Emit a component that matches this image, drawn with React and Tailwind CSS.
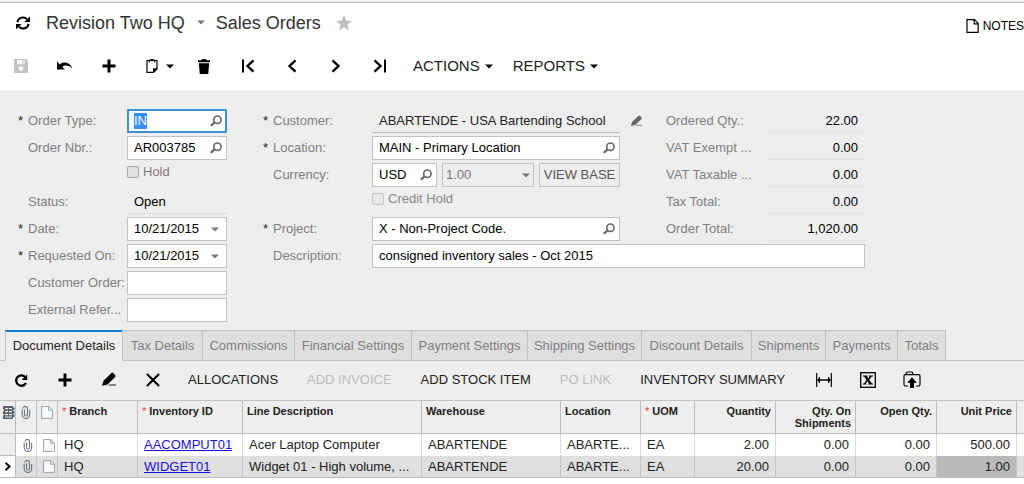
import React, { useEffect, useRef } from "react";

const Svg = ({ w = 16, h = 16, className = "", children }) => (
  <svg width={w} height={h} viewBox={`0 0 ${w} ${h}`} className={`shrink-0 ${className}`} fill="currentColor" aria-hidden="true">
    {children}
  </svg>
);

const Caret = ({ className = "" }) => (
  <Svg w={8} h={5} className={className}>
    <path d="M0 0.5h8L4 4.5z" />
  </Svg>
);

const SearchIcon = () => (
  <Svg w={12} h={12} className="text-[#666]">
    <circle cx="7.4" cy="4.700" r="3.700" fill="none" stroke="currentColor" strokeWidth="1.600" />
    <path d="M4.600 7.400L.8 10.800" stroke="currentColor" strokeWidth="2.200" />
  </Svg>
);

const SyncIcon = () => (
  <Svg w={16} h={16}>
    <path d="M2.400 7.200A5.600 5.600 0 0 1 12 4.200M13.600 8.800A5.600 5.600 0 0 1 4 11.800" fill="none" stroke="currentColor" strokeWidth="2" />
    <path d="M15 1.500v5.500H9.500zM1 14.500V9h5.500z" />
  </Svg>
);

const StarIcon = () => (
  <Svg w={16} h={16} className="text-[#bdbdbd]">
    <path d="M8 0l2.100 5.600 5.900.3-4.600 3.700L13 15.400 8 12.100l-5 3.300 1.600-5.800L0 5.900l5.900-.3z" />
  </Svg>
);

const NoteIcon = () => (
  <Svg w={13} h={14}>
    <path d="M1 .7h7.600L12.200 4.400v8.900H1z" fill="none" stroke="currentColor" strokeWidth="1.200" />
    <path d="M8.200 1v3.800h4" fill="none" stroke="currentColor" strokeWidth="1.200" />
  </Svg>
);

const SaveIcon = () => (
  <Svg w={14} h={14}>
    <path fillRule="evenodd" d="M0 0h12.200L14 1.800V14H0zM3 1.300v4h7.600v-4zM7 7.200a2.300 2.300 0 1 0 .01 0z" />
    <path d="M8 1.500h1.600v3H8z" />
  </Svg>
);

const UndoIcon = () => (
  <Svg w={16} h={12}>
    <path d="M0 1.200L0 9.600h8L5.300 7c2.600-2.200 6.400-2 10 1.300C13.500 3.400 7.600.5 2.700 4.400z" />
  </Svg>
);

const PlusIcon = () => (
  <Svg w={14} h={14}>
    <path d="M5.500.5h3v5h5v3h-5v5h-3v-5h-5v-3h5z" />
  </Svg>
);

const ClipboardIcon = () => (
  <Svg w={12} h={16}>
    <path d="M3 2.700H1v11.600h6.600L11 11V2.700H9" fill="none" stroke="currentColor" strokeWidth="1.200" />
    <path d="M3 4.500V1.600h1.800a1.300 1.300 0 0 1 2.400 0H9v2.900H8V3H4v1.500zM7 15v-4.800h4.700z" />
  </Svg>
);

const TrashIcon = () => (
  <Svg w={12} h={15}>
    <path d="M0 1.200h3.400L4 0h4l.6 1.200H12v2H0zM.8 4.200h10.400l-1 10.800H1.800z" />
  </Svg>
);

const Chevron = ({ dir, bar }) => (
  <Svg w={14} h={14}>
    <g transform={dir === "right" ? "matrix(-1 0 0 1 14 0)" : undefined} fill="none" stroke="currentColor" strokeWidth="2.400">
      {bar && <path d="M2 .5v13" strokeWidth="2" />}
      <path d={bar ? "M12.500 1.300L6.500 7l6 5.700" : "M10.500 1.300L4.500 7l6 5.700"} />
    </g>
  </Svg>
);

const RefreshIcon = () => (
  <Svg w={14} h={14}>
    <path d="M12 10A5.200 5.200 0 1 1 11 3.800" fill="none" stroke="currentColor" strokeWidth="2.300" />
    <path d="M13.200 1.500V7H7.700z" />
  </Svg>
);

const PencilIcon = ({ small = false }) => (
  <svg width={small ? 13 : 16} height={small ? 12 : 15} viewBox="0 0 16 15" fill="currentColor" className="shrink-0" aria-hidden="true">
    <path d="M10.200 1.200a1.500 1.500 0 0 1 2.200 0l1.700 1.700a1.500 1.500 0 0 1 0 2.100l-7.500 7.500L1 13.800l1.500-5z" />
    <path d="M8.500 12.200H15v1.500H7z" opacity=".6" />
  </svg>
);

const CloseIcon = () => (
  <Svg w={14} h={14}>
    <path d="M1 1l12 12M13 1L1 13" stroke="currentColor" strokeWidth="2.100" />
  </Svg>
);

const FitIcon = () => (
  <Svg w={16} h={14}>
    <path d="M.7 0v14M15.300 0v14" stroke="currentColor" strokeWidth="1.200" />
    <path d="M4 6.200h8V3.600L15 7l-3 3.400V7.800H4v2.600L1 7l3-3.400z" />
  </Svg>
);

const ExcelIcon = () => (
  <Svg w={16} h={16}>
    <rect x=".7" y=".7" width="14.600" height="14.600" fill="none" stroke="currentColor" strokeWidth="1.300" />
    <path d="M3 3.500h4.600v1H7L8.400 6.500l1.300-2H9v-1h4v1h-1.200L9.200 7.700l2.800 3.900h1v1H8.200v-1h.9L7.300 9.200l-1.700 2.400h1v1H2.800v-1H4L6.500 8.100 4.100 4.500H3z" />
  </Svg>
);

const UploadIcon = () => (
  <Svg w={18} h={18}>
    <path d="M5 15H2.400C1.500 15 1 14.500 1 13.600V5c0-.8.5-1.300 1.400-1.300h.8V2.200C3.200 1.500 3.600 1 4.400 1h4C9.200 1 9.500 1.400 9.700 2l.5 1.600h5.400c.9 0 1.400.5 1.400 1.400v8.600c0 .9-.5 1.400-1.400 1.400H13M3.200 3.700h7" fill="none" stroke="currentColor" strokeWidth="1.200" />
    <path d="M9 6.200l4.800 5.600H11V17H7v-5.200H4.200z" />
  </Svg>
);

const ClipIcon = () => (
  <Svg w={10} h={13} className="text-[#6b7480]">
    <path d="M3.500 3.500v5a1.500 1.500 0 0 0 3 0V2.800a2.200 2.200 0 0 0-4.500-.2M1.200 3.500v5.200a3.600 3.600 0 0 0 7.400 0V4" fill="none" stroke="currentColor" strokeWidth="1.100" />
  </Svg>
);

const PageIcon = () => (
  <Svg w={12} h={13}>
    <path d="M.6.6h7.200L11.400 4v8.400H.6z" fill="#fafbfc" stroke="#98a3b0" strokeWidth="1" />
    <path d="M7.600.8V4.200h3.600" fill="none" stroke="#98a3b0" />
  </Svg>
);

const GridIcon = () => (
  <Svg w={12} h={13} className="text-[#566270]">
    <path fillRule="evenodd" d="M0 0h10v1.500h1.500V4H10v1h1.500v2.500H10v1h1.500V11H10v2H0V9.500h1V8H0V5h1V3.600H0zM2 2v1.200h3V2zM6 2v1.200h3V2zM2 5v1.200h3V5zM6 5v1.200h3V5zM2 8v1.200h3V8zM6 8v1.200h3V8zM2 10.600v1h7v-1z" />
  </Svg>
);

const IconButton = ({ label, disabled, children }) => (
  <button type="button" aria-label={label} disabled={disabled} className="flex h-8 w-[30px] shrink-0 items-center justify-center text-black disabled:text-[#c4c4c4]">
    {children}
  </button>
);

const Label = ({ htmlFor, required, children }) => (
  <label htmlFor={htmlFor} className="flex items-center whitespace-nowrap text-[#808080]">
    <span className="w-2.5 shrink-0 text-[#222]">{required ? "*" : ""}</span>
    {children}
  </label>
);

const Field = ({ id, value, icon, iconLabel, inputRef, focused }) => (
  <div className={focused ? "flex min-w-0 items-center border-2 border-[#3a93d5] bg-white pl-[5px] pr-[3px]" : "flex min-w-0 items-center border border-[#c2c2c2] bg-white pl-1.5 pr-1"}>
    <input id={id} ref={inputRef} defaultValue={value} className="w-0 min-w-0 grow bg-transparent text-black outline-none selection:bg-[#3390ff] selection:text-white" />
    {icon && (
      <button type="button" aria-label={iconLabel} className="flex shrink-0 items-center">
        {icon}
      </button>
    )}
  </div>
);

const DateField = ({ id, value }) => (
  <Field id={id} value={value} iconLabel="Open calendar" icon={<Caret className="mr-[3px] text-[#777]" />} />
);

const Total = ({ label, value }) => (
  <>
    <span className="col-start-4 flex items-center whitespace-nowrap text-[#808080]">{label}</span>
    <output aria-label={label} className="flex items-center justify-end border-b border-dotted border-[#d8d8d8] pr-[7px] text-black">{value}</output>
  </>
);

const tabs = [
  ["Document Details", "w-[117px]"],
  ["Tax Details", "w-[80px]"],
  ["Commissions", "w-[92px]"],
  ["Financial Settings", "w-[117px]"],
  ["Payment Settings", "w-[116px]"],
  ["Shipping Settings", "w-[114px]"],
  ["Discount Details", "w-[110px]"],
  ["Shipments", "w-[74px]"],
  ["Payments", "w-[72px]"],
  ["Totals", "w-[49px]"],
];

const columns = [
  { title: "Branch", required: true, width: "w-[80px]" },
  { title: "Inventory ID", required: true, width: "w-[105px]" },
  { title: "Line Description", width: "w-[179px]" },
  { title: "Warehouse", width: "w-[139px]" },
  { title: "Location", width: "w-[80px]" },
  { title: "UOM", required: true, width: "w-[54px]" },
  { title: "Quantity", right: true, width: "w-[81px]" },
  { title: "Qty. On Shipments", right: true, width: "w-[80px]" },
  { title: "Open Qty.", right: true, width: "w-[81px]" },
  { title: "Unit Price", right: true, width: "w-[80px]" },
];

const rows = [
  { cells: ["HQ", "AACOMPUT01", "Acer Laptop Computer", "ABARTENDE", "ABARTE...", "EA", "2.00", "0.00", "0.00", "500.00"] },
  { selected: true, cells: ["HQ", "WIDGET01", "Widget 01 - High volume, ...", "ABARTENDE", "ABARTE...", "EA", "20.00", "0.00", "0.00", "1.00"] },
];

function Header() {
  return (
    <header className="border-t-2 border-[#f0f0f0]">
      <div className="border-t border-[#b8b8b8]">
        <div className="flex h-[39px] items-center pl-[15px] text-[18px] text-[#333]">
          <button type="button" aria-label="Refresh" className="mr-[15px] text-black"><SyncIcon /></button>
          <button type="button" className="flex items-center gap-3 whitespace-nowrap">
            Revision Two HQ
            <Caret className="text-[#777]" />
          </button>
          <h1 className="ml-[11px] whitespace-nowrap">Sales Orders</h1>
          <button type="button" aria-label="Add to favorites" className="ml-[15px]"><StarIcon /></button>
          <button type="button" className="ml-auto flex items-center gap-1 pt-1.5 text-[12px] text-black">
            <NoteIcon />
            NOTES
          </button>
        </div>
        <div className="flex h-12 items-center gap-3.5 pl-1.5 text-[15px] text-[#222]">
          <IconButton label="Save" disabled><SaveIcon /></IconButton>
          <IconButton label="Undo"><UndoIcon /></IconButton>
          <IconButton label="Add"><PlusIcon /></IconButton>
          <button type="button" aria-label="Clipboard" className="flex w-[37px] items-center gap-2 pl-2 text-black">
            <ClipboardIcon />
            <Caret />
          </button>
          <IconButton label="Delete"><TrashIcon /></IconButton>
          <IconButton label="First"><Chevron bar /></IconButton>
          <IconButton label="Previous"><Chevron /></IconButton>
          <IconButton label="Next"><Chevron dir="right" /></IconButton>
          <IconButton label="Last"><Chevron dir="right" bar /></IconButton>
          <button type="button" className="flex items-center gap-[5px] pl-1 pr-0.5">ACTIONS<Caret className="text-black" /></button>
          <button type="button" className="flex items-center gap-[5px] pl-1 pr-0.5">REPORTS<Caret className="text-black" /></button>
        </div>
      </div>
    </header>
  );
}

function OrderForm() {
  const orderType = useRef(null);
  useEffect(() => {
    orderType.current.focus();
    orderType.current.select();
  }, []);

  return (
    <form className="flex items-start gap-9 pb-2 pl-[18px] pt-[19px]">
      <div className="grid shrink-0 auto-rows-[24px] grid-cols-[109px_100px] gap-y-[3px]">
        <Label htmlFor="type" required>Order Type:</Label>
        <Field id="type" value="IN" inputRef={orderType} focused icon={<SearchIcon />} iconLabel="Find order type" />
        <Label htmlFor="nbr">Order Nbr.:</Label>
        <Field id="nbr" value="AR003785" icon={<SearchIcon />} iconLabel="Find order" />
        <label className="col-start-2 flex items-center gap-1 pb-1.5 text-[#857878]">
          <input type="checkbox" className="size-3 appearance-none rounded-[2px] border border-[#aaa] bg-[#e2e2e2]" />
          Hold
        </label>
        <Label htmlFor="status">Status:</Label>
        <output id="status" className="flex items-center border-b border-dotted border-[#d0d0d0] pl-[7px] text-black">Open</output>
        <Label htmlFor="date" required>Date:</Label>
        <DateField id="date" value="10/21/2015" />
        <Label htmlFor="requested" required>Requested On:</Label>
        <DateField id="requested" value="10/21/2015" />
        <Label htmlFor="custorder">Customer Order:</Label>
        <Field id="custorder" />
        <Label htmlFor="extref">External Refer...</Label>
        <Field id="extref" />
      </div>

      <div className="grid shrink-0 auto-rows-[24px] grid-cols-[109px_248px_46px_100px_99px] gap-y-[3px]">
        <Label htmlFor="customer" required>Customer:</Label>
        <output id="customer" className="flex items-center whitespace-nowrap border-b border-[#bcbcbc] pl-[7px] text-[#222]">ABARTENDE - USA Bartending School</output>
        <button type="button" aria-label="Edit customer" className="flex items-center pl-2.5 text-[#666]"><PencilIcon small /></button>
        <Total label="Ordered Qty.:" value="22.00" />

        <Label htmlFor="location" required>Location:</Label>
        <Field id="location" value="MAIN - Primary Location" icon={<SearchIcon />} iconLabel="Find location" />
        <Total label="VAT Exempt ..." value="0.00" />

        <Label htmlFor="currency">Currency:</Label>
        <div className="grid grid-cols-[65px_92px_81px] justify-between">
          <Field id="currency" value="USD" icon={<SearchIcon />} iconLabel="Find currency" />
          <div className="grid items-center border border-[#c2c2c2] text-[#777]">
            <select aria-label="Currency rate" disabled className="col-start-1 row-start-1 w-full appearance-none bg-transparent pl-[3px] opacity-100">
              <option>1.00</option>
            </select>
            <Caret className="col-start-1 row-start-1 mr-[3px] justify-self-end" />
          </div>
          <button type="button" className="whitespace-nowrap border border-[#c2c2c2] text-center text-[#555]">VIEW BASE</button>
        </div>
        <Total label="VAT Taxable ..." value="0.00" />

        <label className="col-start-2 flex items-center gap-1 pb-1.5 text-[#888]">
          <input type="checkbox" disabled className="size-3 appearance-none rounded-[2px] border border-[#c4c4c4] bg-[#e8e8e8]" />
          Credit Hold
        </label>
        <Total label="Tax Total:" value="0.00" />

        <Label htmlFor="project" required>Project:</Label>
        <Field id="project" value="X - Non-Project Code." icon={<SearchIcon />} iconLabel="Find project" />
        <Total label="Order Total:" value="1,020.00" />

        <Label htmlFor="description">Description:</Label>
        <div className="col-span-4 grid">
          <Field id="description" value="consigned inventory sales - Oct 2015" />
        </div>
      </div>
    </form>
  );
}

function TabBar() {
  return (
    <div role="tablist" className="flex h-[31px] text-[#808080]">
      <span className="w-[5px] shrink-0 border-b border-[#c2c2c2]" />
      {tabs.map(([name, width], i) => (
        <button
          key={name}
          type="button"
          role="tab"
          aria-selected={i === 0}
          className={`${width} shrink-0 whitespace-nowrap ${
            i === 0
              ? "border-l border-t-2 border-l-[#c2c2c2] border-t-[#0a84d0] pb-0.5 text-[#222]"
              : "border-b border-l border-t border-[#c2c2c2] bg-[#dfdfdf] last-of-type:border-r"
          }`}
        >
          {name}
        </button>
      ))}
      <span className="grow border-b border-[#c2c2c2]" />
    </div>
  );
}

const TextButton = ({ disabled, children }) => (
  <button type="button" disabled={disabled} className="shrink-0 whitespace-nowrap text-[#222] disabled:text-[#bdbdbd]">
    {children}
  </button>
);

function GridToolbar() {
  return (
    <div className="flex h-[39px] items-center gap-3.5 pb-0.5 pl-1.5">
      <IconButton label="Refresh lines"><RefreshIcon /></IconButton>
      <IconButton label="Add line"><PlusIcon /></IconButton>
      <IconButton label="Edit line"><PencilIcon /></IconButton>
      <IconButton label="Delete line"><CloseIcon /></IconButton>
      <div className="flex shrink-0 gap-[29px] pl-1.5 pr-2.5">
        <TextButton>ALLOCATIONS</TextButton>
        <TextButton disabled>ADD INVOICE</TextButton>
        <TextButton>ADD STOCK ITEM</TextButton>
        <TextButton disabled>PO LINK</TextButton>
        <TextButton>INVENTORY SUMMARY</TextButton>
      </div>
      <IconButton label="Fit columns"><FitIcon /></IconButton>
      <IconButton label="Export to Excel"><ExcelIcon /></IconButton>
      <IconButton label="Upload file"><UploadIcon /></IconButton>
    </div>
  );
}

function LinesTable() {
  return (
    <table className="w-full table-fixed border-separate border-spacing-0 border-t border-[#c2c2c2]">
      <thead className="text-left align-top text-[11px] leading-3 text-[#222]">
        <tr className="h-[33px]">
          <th aria-label="Row settings" className="w-[16px] border-b border-r border-[#bcbcbc] pl-[3px] pt-[5px]"><GridIcon /></th>
          <th aria-label="Files" className="w-[21px] border-b border-r border-[#bcbcbc] pl-[5px] pt-[5px]"><ClipIcon /></th>
          <th aria-label="Notes" className="w-[21px] border-b border-r border-[#bcbcbc] pl-1 pt-[5px]"><PageIcon /></th>
          {columns.map((c) => (
            <th key={c.title} className={`${c.width} border-b border-r border-[#bcbcbc] pr-1 pt-1 ${c.right ? "pl-4 text-right" : "overflow-hidden whitespace-nowrap pl-1"}`}>
              {c.required && <span className="mr-[3px] font-normal text-[#f33]">*</span>}
              {c.title}
            </th>
          ))}
          <th aria-label="More" className="border-b border-[#bcbcbc]" />
        </tr>
      </thead>
      <tbody>
        {rows.map((row) => {
          const line = row.selected ? "border-b border-b-[#bcbcbc] border-r-[#c6c6c6]" : "border-r-[#dcdcdc]";
          return (
            <tr key={row.cells[1]} className={row.selected ? "h-[22px] bg-[#dfdfdf]" : "h-[22px] bg-white"}>
              <td className={`border-b border-r border-[#bcbcbc] pl-1 ${row.selected ? "bg-white" : "bg-[#eee]"}`}>
                {row.selected && (
                  <Svg w={8} h={9} className="text-black"><path d="M1.500.8L5.500 4.500l-4 3.700" fill="none" stroke="currentColor" strokeWidth="2" /></Svg>
                )}
              </td>
              <td className={`border-r pl-[7px] ${line}`}><ClipIcon /></td>
              <td className={`border-r pl-1.5 ${line}`}><PageIcon /></td>
              {row.cells.map((cell, i) => (
                <td
                  key={i}
                  className={`overflow-hidden whitespace-nowrap border-r text-[#222] ${line} ${i > 5 ? "pr-1.5 text-right" : "pl-1.5"} ${row.selected && i === 9 ? "bg-[#bababa]" : ""}`}
                >
                  {i === 1 ? <a href="#item" className="text-[#1a10e0] underline">{cell}</a> : cell}
                </td>
              ))}
              <td className={line} />
            </tr>
          );
        })}
      </tbody>
    </table>
  );
}

export default function App() {
  return (
    <div className="min-h-screen overflow-x-hidden bg-white font-['Liberation_Sans',Arial,sans-serif] text-[13px] leading-4">
      <Header />
      <main className="bg-[#eee]">
        <OrderForm />
        <TabBar />
        <GridToolbar />
        <LinesTable />
      </main>
    </div>
  );
}
